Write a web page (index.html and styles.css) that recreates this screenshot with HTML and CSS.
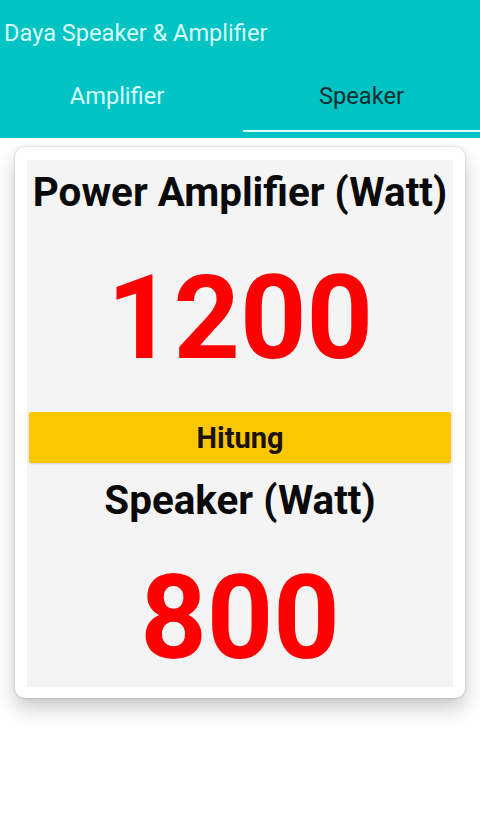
FILE: index.html
```
<!DOCTYPE html>
<html>
<head>
<meta charset="utf-8">
<link rel="stylesheet" href="styles.css">
</head>
<body>
<header class="appbar">
  <div class="title">Daya Speaker &amp; Amplifier</div>
  <nav class="tabs">
    <div class="tab first-tab">Amplifier</div>
    <div class="tab active">Speaker</div>
  </nav>
</header>
<main class="content">
  <section class="card">
    <div class="inner">
      <div class="label">Power Amplifier (Watt)</div>
      <div class="value first">1200</div>
      <div class="button">Hitung</div>
      <div class="label">Speaker (Watt)</div>
      <div class="value second">800</div>
    </div>
  </section>
</main>
</body>
</html>
```
FILE: styles.css
```
* { box-sizing: border-box; }
html, body { margin: 0; padding: 0; }
body {
  width: 480px;
  height: 816px;
  background: #ffffff;
  font-family: Roboto, "Liberation Sans", sans-serif;
  overflow: hidden;
}
.appbar {
  background: #00c3c3;
  height: 138px;
  display: flex;
  flex-direction: column;
}
.title {
  color: #d8ffff;
  font-size: 23.6px;
  line-height: 28px;
  padding: 19px 0 0 4px;
  height: 64px;
}
.tabs {
  display: flex;
  flex: 1;
}
.tab {
  display: flex;
  align-items: center;
  justify-content: center;
  color: #d8ffff;
  font-size: 23.6px;
  padding-bottom: 3px;
  border-bottom: 2px solid transparent;
  margin-bottom: 6px;
}
.tab.first-tab {
  width: 243px;
  padding-right: 9px;
}
.tab.active {
  flex: 1;
  color: #0b2e2e;
  border-bottom-color: #d8ffff;
}
.content {
  padding: 9px 15px 0 15px;
}
.card {
  background: #ffffff;
  border-radius: 10px;
  padding: 13px 12px 11px 12px;
  box-shadow: 0 10px 20px rgba(0,0,0,0.22), 0 0 3px rgba(0,0,0,0.2);
}
.inner {
  background: #f4f4f4;
  display: flex;
  flex-direction: column;
  align-items: stretch;
  padding: 9px 2px 11px 2px;
}
.label {
  text-align: center;
  font-weight: 700;
  font-size: 40.4px;
  line-height: 48px;
  color: #0a0a0a;
}
.value {
  text-align: center;
  font-weight: 700;
  font-size: 116px;
  line-height: 116px;
  color: #ff0000;
}
.value.first { margin: 43px 0 36px 0; }
.value.second { margin-top: 35px; }
.button {
  background: #fcc600;
  height: 51px;
  border-radius: 2px;
  display: flex;
  align-items: center;
  justify-content: center;
  font-weight: 700;
  font-size: 29px;
  color: #1a1208;
  margin-bottom: 14px;
  box-shadow: 0 1px 2px rgba(0,0,0,0.15);
}
```
